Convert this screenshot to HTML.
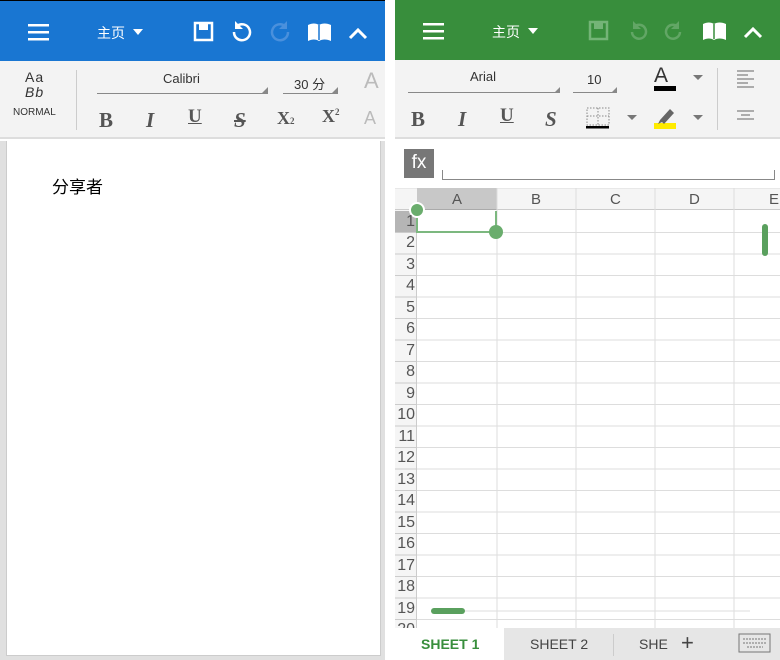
<!DOCTYPE html>
<html><head><meta charset="utf-8"><style>
*{margin:0;padding:0;box-sizing:border-box}
body{width:780px;height:660px;overflow:hidden;background:#fff;font-family:"Liberation Sans","Noto Sans CJK SC",sans-serif;position:relative}
.a{position:absolute}
.t{color:#fff;font-size:14px}
.gr{color:#333}
.bi{font-family:"Liberation Serif",serif;font-weight:bold;font-size:21px;color:#555}
.rl{position:absolute;left:395px;width:22px;text-align:right;padding-right:2px;font-size:16px;color:#555}
</style></head><body>
<!-- LEFT -->
<div class="a" style="left:0;top:0;width:385px;height:1px;background:#000"></div>
<div class="a" style="left:0;top:1px;width:385px;height:60px;background:#1976d2"></div>
<svg class="a" style="left:0;top:0" width="385" height="61">
<g fill="#fff"><rect x="28" y="24" width="21" height="2.5"/><rect x="28" y="31" width="21" height="2.5"/><rect x="28" y="38" width="21" height="2.5"/>
<path d="M133 29h10l-5 6z"/></g>
<rect x="195" y="23" width="17" height="17" fill="none" stroke="#fff" stroke-width="2.5"/><rect x="199" y="23" width="9" height="7" fill="#fff"/>
<path d="M237 26a8 8 0 1 1 -3 6" fill="none" stroke="#fff" stroke-width="2.5"/><path d="M235 21v8h8z" fill="#fff"/>
<path d="M285 26a8 8 0 1 0 3 6" fill="none" stroke="#4a90dc" stroke-width="2.5"/><path d="M287 21v8h-8z" fill="#4a90dc"/>
<path d="M308 25c4-2 8-2 11 0c3-2 8-2 12 0v16c-4-2-9-2-12 0c-3-2-7-2-11 0z" fill="#fff"/><path d="M319 25v15" stroke="#1976d2" stroke-width="1.5"/>
<path d="M350 38l8-8l8 8" fill="none" stroke="#fff" stroke-width="3"/>
</svg>
<div class="a t" style="left:97px;top:23px">主页</div>
<div class="a" style="left:0;top:61px;width:385px;height:78px;background:#f3f3f3;border-bottom:2px solid #ddd"></div>
<div class="a gr" style="left:25px;top:69px;font-size:14px;letter-spacing:1px">Aa</div>
<div class="a gr" style="left:25px;top:84px;font-size:14px;font-style:italic;letter-spacing:1px">Bb</div>
<div class="a gr" style="left:13px;top:107px;font-size:10px">NORMAL</div>
<div class="a" style="left:76px;top:70px;width:1px;height:60px;background:#ccc"></div>
<div class="a gr" style="left:163px;top:71px;font-size:13px">Calibri</div>
<div class="a" style="left:97px;top:93px;width:171px;height:1px;background:#888"></div>
<div class="a gr" style="left:294px;top:74px;font-size:13px">30 分</div>
<div class="a" style="left:283px;top:93px;width:55px;height:1px;background:#888"></div>
<svg class="a" style="left:0;top:0" width="385" height="140"><path d="M268 87v6h-6z M338 87v6h-6z" fill="#888"/></svg>
<div class="a" style="left:364px;top:68px;font-size:22px;color:#bbb">A</div>
<div class="a" style="left:364px;top:108px;font-size:18px;color:#bbb">A</div>
<div class="a bi" style="left:99px;top:108px">B</div>
<div class="a bi" style="left:146px;top:108px;font-style:italic">I</div>
<div class="a bi" style="left:188px;top:106px;text-decoration:underline;font-size:19px">U</div>
<div class="a bi" style="left:234px;top:108px;font-style:italic;text-decoration:line-through">S</div>
<div class="a bi" style="left:277px;top:108px;font-size:18px">X<span style="font-size:9px">2</span></div>
<div class="a bi" style="left:322px;top:106px;font-size:18px">X<sup style="font-size:9px">2</sup></div>
<div class="a" style="left:0;top:141px;width:385px;height:519px;background:#e0e0e0"></div>
<div class="a" style="left:6px;top:141px;width:375px;height:515px;background:#fff;border:1px solid #ccc;border-top:none"></div>
<div class="a" style="left:52px;top:173px;font-size:17px;color:#000">分享者</div>
<!-- RIGHT -->
<div class="a" style="left:395px;top:0;width:385px;height:60px;background:#388e3c"></div>
<svg class="a" style="left:395px;top:0" width="385" height="60">
<g fill="#fff"><rect x="28" y="23" width="21" height="2.5"/><rect x="28" y="30" width="21" height="2.5"/><rect x="28" y="37" width="21" height="2.5"/>
<path d="M133 28h10l-5 6z"/></g>
<rect x="195" y="22" width="17" height="17" fill="none" stroke="#74b477" stroke-width="2.5"/><rect x="199" y="22" width="9" height="7" fill="#74b477"/>
<path d="M240 26a7 7 0 1 1 -3 6" fill="none" stroke="#62a665" stroke-width="2.5"/><path d="M238 21v8h8z" fill="#62a665"/>
<path d="M282 26a7 7 0 1 0 3 6" fill="none" stroke="#62a665" stroke-width="2.5"/><path d="M284 21v8h-8z" fill="#62a665"/>
<path d="M308 24c4-2 8-2 11 0c3-2 8-2 12 0v16c-4-2-9-2-12 0c-3-2-7-2-11 0z" fill="#fff"/><path d="M319 24v15" stroke="#388e3c" stroke-width="1.5"/>
<path d="M350 37l8-8l8 8" fill="none" stroke="#fff" stroke-width="3"/>
</svg>
<div class="a t" style="left:492px;top:22px">主页</div>
<div class="a" style="left:395px;top:60px;width:385px;height:79px;background:#f3f3f3;border-bottom:2px solid #ddd"></div>
<div class="a gr" style="left:470px;top:69px;font-size:13px">Arial</div>
<div class="a" style="left:408px;top:92px;width:152px;height:1px;background:#888"></div>
<div class="a gr" style="left:587px;top:72px;font-size:13px">10</div>
<div class="a" style="left:573px;top:92px;width:44px;height:1px;background:#888"></div>
<div class="a gr" style="left:654px;top:64px;font-size:21px">A</div>
<div class="a" style="left:654px;top:86px;width:22px;height:5px;background:#000"></div>
<div class="a" style="left:654px;top:123px;width:22px;height:6px;background:#ffeb00"></div>
<div class="a" style="left:717px;top:68px;width:1px;height:62px;background:#ccc"></div>
<svg class="a" style="left:395px;top:60px" width="385" height="80">
<path d="M165 27v6h-6z M222 27v6h-6z" fill="#888"/>
<path d="M298 15h10l-5 5z M298 55h10l-5 5z M232 55h10l-5 5z" fill="#777"/>
<g stroke="#666"><path d="M342 11h17M342 15h11M342 19h17M342 23h11M342 27h17"/><path d="M342 51h17M346 55h9M342 59h17"/></g>
<rect x="192" y="48" width="22" height="17" fill="none" stroke="#888" stroke-dasharray="1.5 1.5"/><path d="M203 48v17M192 56h22" stroke="#888" stroke-dasharray="1.5 1.5"/><rect x="191" y="66" width="23" height="2.5" fill="#000"/>
<path d="M265 60l10-11l4 4l-10 11z M263 64l4-2l-2-2z" fill="#666"/>
</svg>
<div class="a bi" style="left:411px;top:107px">B</div>
<div class="a bi" style="left:458px;top:107px;font-style:italic">I</div>
<div class="a bi" style="left:500px;top:105px;text-decoration:underline;font-size:19px">U</div>
<div class="a bi" style="left:545px;top:107px;font-style:italic">S</div>
<div class="a" style="left:404px;top:149px;width:30px;height:29px;background:#777;color:#fff;font-size:19px;text-align:center;line-height:28px">fx</div>
<div class="a" style="left:442px;top:170px;width:333px;height:10px;border:1px solid #888;border-top:none"></div>
<!-- grid -->
<div class="a" style="left:395px;top:188px;width:385px;height:22px;background:#f5f5f5;border-bottom:1px solid #ccc;border-top:1px solid #e8e8e8"></div>
<div class="a" style="left:417px;top:188px;width:80px;height:22px;background:#c8c8c8;border-bottom:1px solid #aaa"></div>
<div class="a" style="left:395px;top:210px;width:22px;height:420px;background:#f5f5f5;border-right:1px solid #ccc"></div>
<div class="a" style="left:395px;top:211px;width:22px;height:21px;background:#b5b5b5"></div>
<svg class="a" style="left:395px;top:188px" width="385" height="445">
<g stroke="#ddd"><path d="M102 0v445M181 0v445M260 0v445M339 0v445"/>
<path d="M22 44.5h363M22 66h363M22 87.5h363M22 109h363M22 130.5h363M22 152h363M22 173.5h363M22 195h363M22 216.5h363M22 238h363M22 259.5h363M22 281h363M22 302.5h363M22 324h363M22 345.5h363M22 367h363M22 388.5h363M22 410h363M22 431.5h363"/></g>
<g stroke="#ccc"><path d="M0 44.5h22M0 66h22M0 87.5h22M0 109h22M0 130.5h22M0 152h22M0 173.5h22M0 195h22M0 216.5h22M0 238h22M0 259.5h22M0 281h22M0 302.5h22M0 324h22M0 345.5h22M0 367h22M0 388.5h22M0 410h22M0 431.5h22"/></g>
<path d="M22 23v21h79v-21" fill="none" stroke="#7cb87f" stroke-width="2"/>
<circle cx="22" cy="22" r="7" fill="#6aad6d" stroke="#fff" stroke-width="2"/>
<circle cx="101" cy="44" r="7" fill="#6aad6d"/>
<rect x="367" y="36" width="6" height="32" rx="3" fill="#5aa05e"/>
<rect x="36" y="420" width="34" height="6" rx="3" fill="#5aa05e"/>
<path d="M70 423h285" stroke="#ddd"/>
</svg>
<div class="a" style="left:452px;top:191px;font-size:15px;color:#555">A</div>
<div class="a" style="left:531px;top:191px;font-size:15px;color:#555">B</div>
<div class="a" style="left:610px;top:191px;font-size:15px;color:#555">C</div>
<div class="a" style="left:689px;top:191px;font-size:15px;color:#555">D</div>
<div class="a" style="left:769px;top:191px;font-size:15px;color:#555">E</div>
<div class="rl" style="top:213px">1</div><div class="rl" style="top:234px">2</div><div class="rl" style="top:256px">3</div><div class="rl" style="top:277px">4</div><div class="rl" style="top:299px">5</div><div class="rl" style="top:320px">6</div><div class="rl" style="top:342px">7</div><div class="rl" style="top:363px">8</div><div class="rl" style="top:385px">9</div><div class="rl" style="top:406px">10</div><div class="rl" style="top:428px">11</div><div class="rl" style="top:449px">12</div><div class="rl" style="top:471px">13</div><div class="rl" style="top:492px">14</div><div class="rl" style="top:514px">15</div><div class="rl" style="top:535px">16</div><div class="rl" style="top:557px">17</div><div class="rl" style="top:578px">18</div><div class="rl" style="top:600px">19</div><div class="rl" style="top:621px">20</div>
<!-- tabs -->
<div class="a" style="left:395px;top:628px;width:385px;height:32px;background:#e6e6e6"></div>
<div class="a" style="left:395px;top:628px;width:109px;height:32px;background:#fff"></div>
<div class="a" style="left:421px;top:636px;font-size:14px;color:#388e3c;font-weight:bold">SHEET 1</div>
<div class="a" style="left:530px;top:636px;font-size:14px;color:#444">SHEET 2</div>
<div class="a" style="left:613px;top:634px;width:1px;height:22px;background:#ccc"></div>
<div class="a" style="left:639px;top:636px;font-size:14px;color:#444">SHE</div>
<div class="a" style="left:681px;top:630px;font-size:22px;color:#444">+</div>
<svg class="a" style="left:738px;top:633px" width="38" height="22"><rect x="1" y="1" width="31" height="18" fill="none" stroke="#777"/><path d="M5 6h24M5 10h24M9 14h16" stroke="#777" stroke-dasharray="2 1"/></svg>
</body></html>
